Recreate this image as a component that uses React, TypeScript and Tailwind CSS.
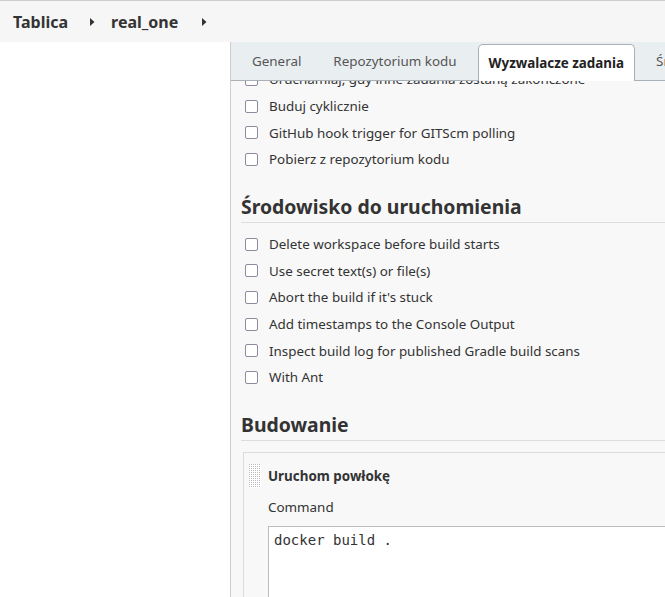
const triggers = [
  "Uruchamiaj, gdy inne zadania zostaną zakończone",
  "Buduj cyklicznie",
  "GitHub hook trigger for GITScm polling",
  "Pobierz z repozytorium kodu",
];

const environment = [
  "Delete workspace before build starts",
  "Use secret text(s) or file(s)",
  "Abort the build if it's stuck",
  "Add timestamps to the Console Output",
  "Inspect build log for published Gradle build scans",
  "With Ant",
];

const tabs = ["General", "Repozytorium kodu", "Wyzwalacze zadania", "Środowisko do uruchomienia"];

const Arrow = ({ className }: { className: string }) => (
  <svg width="5" height="8" viewBox="0 0 5 8" className={className}>
    <path d="M0 0 L4.5 4 L0 8 Z" fill="#333" />
  </svg>
);

const CheckRow = ({ label }: { label: string }) => (
  <label className="flex h-[26.7px] items-center gap-[11px] pl-[14px]">
    <span className="h-[13px] w-[13px] shrink-0 rounded-[2px] border-[1.5px] border-[#8f8b9c] bg-white" />
    <span className="whitespace-nowrap text-[13.4px] text-[#333]">{label}</span>
  </label>
);

const SectionTitle = ({ children }: { children: string }) => (
  <h2 className="ml-[10px] mt-[20px] mb-[8px] border-b border-[#ddd] pb-px text-[19.4px] font-bold leading-[28px] text-[#333]">
    {children}
  </h2>
);

const Grip = () => (
  <svg width="12" height="24" className="shrink-0">
    <defs>
      <pattern id="grip" width="2" height="2" patternUnits="userSpaceOnUse">
        <rect width="1" height="1" fill="#bdbdbd" />
      </pattern>
    </defs>
    <rect width="12" height="24" fill="#fff" />
    <rect width="12" height="24" fill="url(#grip)" />
  </svg>
);

const App = () => {
  return (
    <div className="h-[597px] w-[665px] overflow-hidden bg-white font-['Noto_Sans',sans-serif]">
      <div className="flex h-[42px] items-center border-t border-[#cfcfcf] bg-[#f6f6f6] pl-[13px] text-[16px] font-bold text-[#333]">
        <span>Tablica</span>
        <Arrow className="ml-[22px] mr-[16px]" />
        <span>real_one</span>
        <Arrow className="ml-[24px]" />
      </div>

      <div className="flex h-[555px]">
        <div className="w-[231px] shrink-0 border-r border-[#cdcdcd] bg-white" />

        <div className="relative min-w-0 flex-1 overflow-hidden bg-[#f8f8f8]">
          <div className="relative z-10 flex h-[39px] items-end gap-[10px] border-b border-[#a9b0b6] bg-[#e9eef1] pl-[10px] text-[13.4px] whitespace-nowrap text-[#555]">
            {tabs.map((t) =>
              t === "Wyzwalacze zadania" ? (
                <div
                  key={t}
                  className="-mb-px flex h-[37px] shrink-0 items-center rounded-t-[5px] border border-b-0 border-[#a9b0b6] bg-white px-[10px] font-bold text-[#222]"
                >
                  {t}
                </div>
              ) : (
                <div key={t} className="flex h-[37px] shrink-0 items-center px-[11px]">
                  {t}
                </div>
              )
            )}
          </div>

          <div className="mt-[-15px] w-[520px]">
            {triggers.map((t) => (
              <CheckRow key={t} label={t} />
            ))}

            <SectionTitle>Środowisko do uruchomienia</SectionTitle>
            {environment.map((t) => (
              <CheckRow key={t} label={t} />
            ))}

            <SectionTitle>Budowanie</SectionTitle>
            <div className="ml-[12px] mt-[11px] border border-[#dcdcdc] bg-[#f8f8f8] pb-4 pl-[5px] pt-[11px]">
              <div className="flex items-center gap-[7px]">
                <Grip />
                <span className="whitespace-nowrap text-[13.4px] font-bold text-[#333]">Uruchom powłokę</span>
              </div>
              <div className="ml-[19px] mt-[9px] text-[13.4px] leading-[20px] text-[#333]">Command</div>
              <div className="ml-[19px] mt-[9px] h-[120px] border border-[#bcbcbc] bg-white px-[5px] pt-[3px] font-['DejaVu_Sans_Mono',monospace] text-[14px] text-[#333]">
                docker build .
              </div>
            </div>
          </div>
        </div>
      </div>
    </div>
  );
};

export default App;
